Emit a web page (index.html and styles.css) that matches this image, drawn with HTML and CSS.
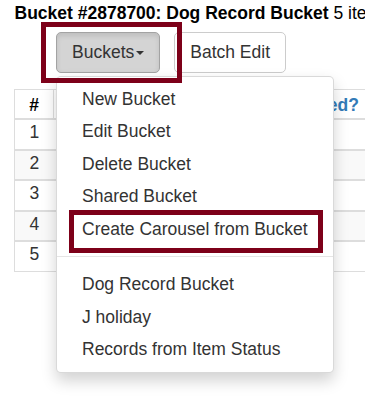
FILE: index.html
```html
<!DOCTYPE html>
<html lang="en">
<head>
    <meta charset="UTF-8">
    <meta name="viewport" content="width=device-width, initial-scale=1.0">
    <title>Bucket #2878700</title>
    <link rel="stylesheet" href="styles.css">
</head>
<body>
    <div class="page">
        <div class="bucket-title"><b>Bucket #2878700: Dog Record Bucket</b> 5 items</div>

        <div class="toolbar">
            <div class="btn-group">
                <button type="button" class="btn active">Buckets<span class="caret"></span></button>
                <ul class="dropdown-menu">
                    <li><a href="#">New Bucket</a></li>
                    <li><a href="#">Edit Bucket</a></li>
                    <li><a href="#">Delete Bucket</a></li>
                    <li><a href="#">Shared Bucket</a></li>
                    <li><a href="#">Create Carousel from Bucket</a></li>
                    <li class="divider"></li>
                    <li><a href="#">Dog Record Bucket</a></li>
                    <li><a href="#">J holiday</a></li>
                    <li><a href="#">Records from Item Status</a></li>
                </ul>
            </div>
            <button type="button" class="btn">Batch Edit</button>
        </div>

        <table class="items">
            <thead>
                <tr>
                    <th class="num">#</th>
                    <th class="title-col"><a href="#">Title</a></th>
                    <th class="flag-col"><a href="#">Deleted?</a></th>
                </tr>
            </thead>
            <tbody>
                <tr><td class="num">1</td><td></td><td></td></tr>
                <tr><td class="num">2</td><td></td><td></td></tr>
                <tr><td class="num">3</td><td></td><td></td></tr>
                <tr><td class="num">4</td><td></td><td></td></tr>
                <tr><td class="num">5</td><td></td><td></td></tr>
            </tbody>
        </table>
    </div>

    <!-- пометки поверх скриншота -->
    <div class="mark mark-buckets"></div>
    <div class="mark mark-carousel"></div>
</body>
</html>
```

FILE: styles.css
```css
html {
    overflow: hidden;
}

body {
    margin: 0;
    min-height: 396px;
    font-family: "Liberation Sans", Arial, sans-serif;
    font-size: 17.5px;
    line-height: 25px;
    color: #333;
    background: #fff;
}

.page {
    padding: 1px 0 0 14.5px;
}

.bucket-title {
    color: #000;
    white-space: nowrap;
}

.toolbar {
    display: flex;
    gap: 14px;
    margin: 6px 0 0 41.5px;
}

.btn-group {
    position: relative;
}

.btn {
    display: block;
    font-family: inherit;
    font-size: 17.5px;
    line-height: 25px;
    padding: 7px 15px;
    color: #333;
    background-color: #fff;
    border: 1px solid #ccc;
    border-radius: 5px;
    cursor: pointer;
}

.btn.active {
    background-color: #d4d4d4;
    border-color: #a3a3a3;
    box-shadow: inset 0 3px 5px rgba(0, 0, 0, 0.1);
}

.caret {
    display: inline-block;
    width: 0;
    height: 0;
    margin-left: 2px;
    vertical-align: middle;
    border-top: 4px solid #333;
    border-left: 4px solid transparent;
    border-right: 4px solid transparent;
}

.dropdown-menu {
    position: absolute;
    top: 100%;
    left: 0;
    z-index: 1000;
    margin: 2.5px 0 0;
    padding: 6.25px 0;
    list-style: none;
    background-color: #fff;
    border: 1px solid rgba(0, 0, 0, 0.15);
    border-radius: 5px;
    box-shadow: 0 7.5px 15px rgba(0, 0, 0, 0.175);
}

.dropdown-menu a {
    display: block;
    padding: 3.75px 25px;
    color: #333;
    text-decoration: none;
    white-space: nowrap;
}

.dropdown-menu .divider {
    height: 1px;
    margin: 11px 0;
    background-color: #e5e5e5;
}

.items {
    margin: 16px 0 0 -0.5px;
    border-collapse: collapse;
    border-left: 1px solid #ddd;
    width: 420px;
}

.items th {
    padding: 3px 0 0;
    border-top: 1px solid #ddd;
    border-bottom: 2px solid #ddd;
    border-right: 1px solid #ddd;
    text-align: left;
    font-weight: bold;
    color: #000;
}

.items th a {
    color: #337ab7;
    text-decoration: none;
}

.items td {
    padding: 0 0 3.5px;
    border-bottom: 2px solid #ddd;
}

.items tbody tr:nth-child(even) td {
    background-color: #f9f9f9;
}

.items tbody tr:last-child td {
    border-bottom-width: 1px;
}

.items .num {
    width: 38px;
    text-align: center;
}

.items .title-col {
    width: 212px;
    padding-left: 9px;
}

.items .flag-col {
    padding-left: 9px;
}

.mark {
    position: absolute;
    border: 5px solid #7d0019;
    z-index: 2000;
}

.mark-buckets {
    left: 41px;
    top: 22px;
    width: 131px;
    height: 51px;
}

.mark-carousel {
    left: 69px;
    top: 210px;
    width: 244px;
    height: 33px;
}
```
